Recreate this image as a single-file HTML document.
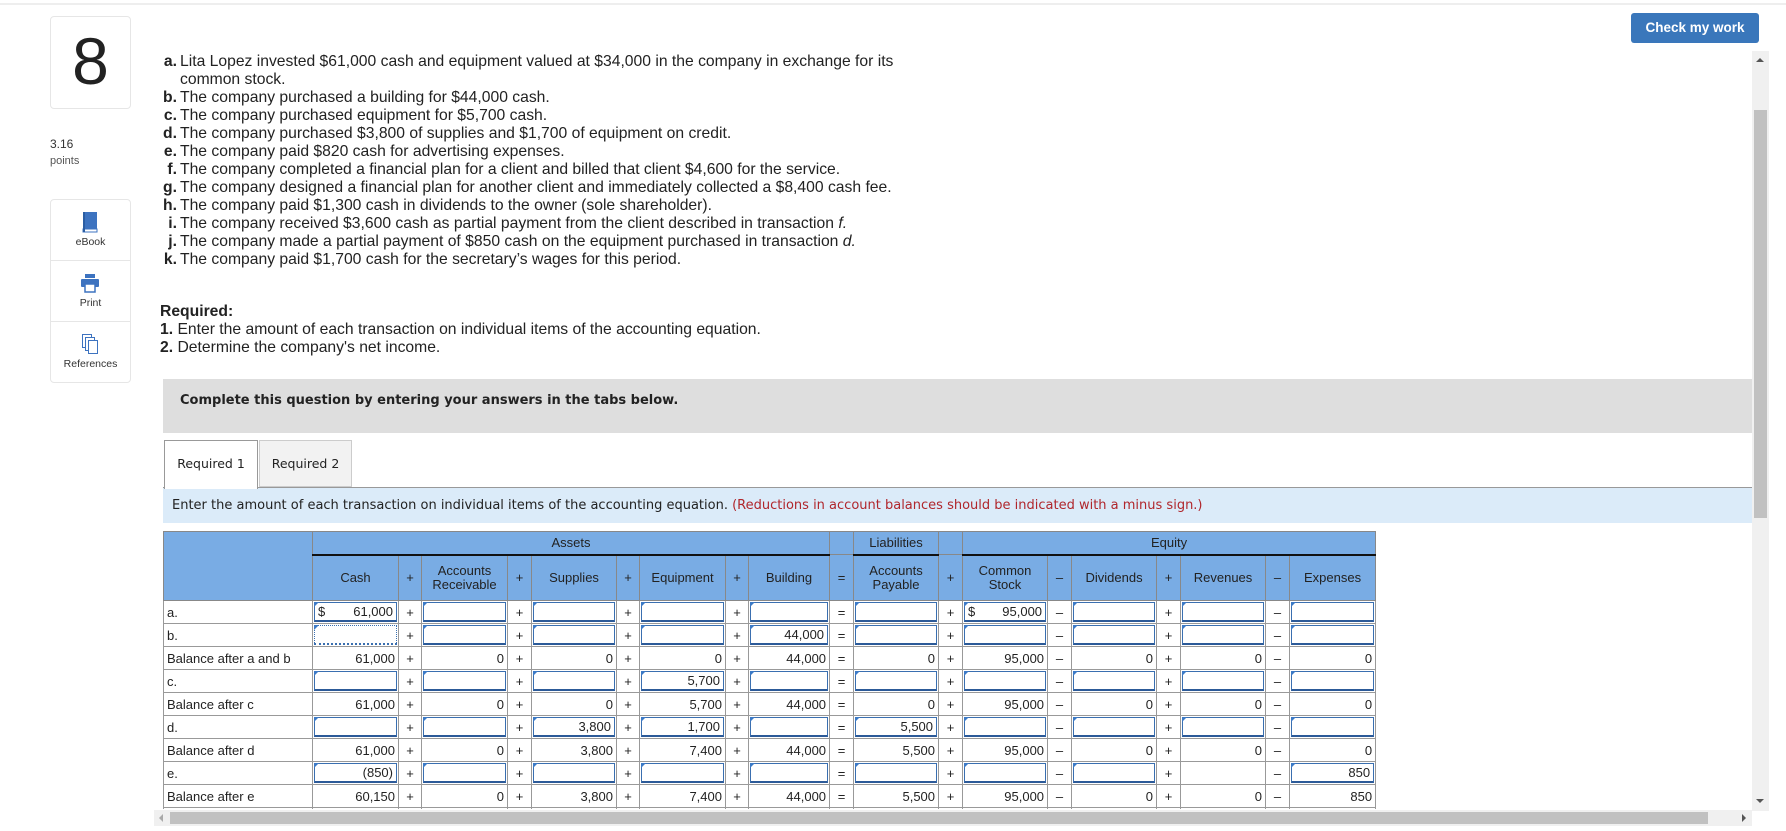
<!DOCTYPE html>
<html><head><meta charset="utf-8"><style>
*{margin:0;padding:0;box-sizing:border-box}
body{width:1786px;height:831px;overflow:hidden;background:#fff;font-family:"Liberation Sans",Arial,sans-serif;color:#222;position:relative}
.abs{position:absolute}
.topline{left:0;top:3px;width:1786px;height:2px;background:#eee}
.card{border:1px solid #e6e6e6;border-radius:4px;background:#fff}
.q{font-size:15.7px;line-height:18px;color:#222}
.q div{position:relative;padding-left:18px;white-space:nowrap}
.q b{position:absolute;left:0;width:15px;text-align:right;font-weight:bold}
.side{font-size:10.5px;color:#333;text-align:center}
table{border-collapse:collapse;table-layout:fixed;font-size:13px;font-family:"Liberation Sans",Arial,sans-serif}
td{height:23px;border:1px solid #999;padding:0 3px;white-space:nowrap;text-align:right;color:#222}
td.op{text-align:center;padding:0}
td.lbl{text-align:left}
thead td{background:#79ace4;text-align:center;border-color:#888;line-height:14px}
td.inp{padding:0;position:relative}
td.inp div{position:absolute;left:1px;top:1px;right:1px;bottom:1px;border:1px solid #3a6fb0;border-bottom:2px solid #2c5a98;background:#fff;padding:0 3px;line-height:18px;text-align:right}
td.inp div:before{content:"";position:absolute;left:-1px;top:-1px;border-left:5px solid #3c7ac6;border-bottom:5px solid transparent}
td.inp div.dot{border:1px dotted #3a6fb0;border-bottom:2px dotted #3a6fb0}
.dl{float:left}
</style></head><body>
<div class="abs topline"></div>

<div class="abs card" style="left:50px;top:16px;width:81px;height:93px"></div>
<div class="abs" style="left:50px;top:18px;width:81px;text-align:center;font-size:66px;font-weight:300;line-height:86px;color:#222">8</div>
<div class="abs" style="left:50px;top:137px;font-size:12px;color:#333">3.16</div>
<div class="abs" style="left:50px;top:155px;font-size:11px;color:#555">points</div>

<div class="abs card" style="left:50px;top:199px;width:81px;height:184px"></div>
<div class="abs" style="left:51px;top:260px;width:79px;height:1px;background:#e6e6e6"></div>
<div class="abs" style="left:51px;top:321px;width:79px;height:1px;background:#e6e6e6"></div>
<svg class="abs" style="left:81px;top:211px" width="18" height="22" viewBox="0 0 18 22"><rect x="2" y="1" width="14" height="17" fill="#3d73c0"/><rect x="2" y="18" width="14" height="3" fill="#fff" stroke="#3d73c0"/><rect x="2" y="1" width="2" height="20" fill="#2a5da3"/></svg>
<div class="abs side" style="left:50px;top:236px;width:81px">eBook</div>
<svg class="abs" style="left:80px;top:273px" width="20" height="20" viewBox="0 0 20 20"><rect x="5" y="1" width="10" height="4" fill="#3d73c0"/><rect x="1" y="6" width="18" height="8" rx="1" fill="#3d73c0"/><rect x="5" y="11" width="10" height="8" fill="#fff" stroke="#3d73c0" stroke-width="1.5"/></svg>
<div class="abs side" style="left:50px;top:297px;width:81px">Print</div>
<svg class="abs" style="left:81px;top:333px" width="18" height="22" viewBox="0 0 18 22"><rect x="1.5" y="1.5" width="9" height="13" fill="#fff" stroke="#3d73c0"/><rect x="4.5" y="4.5" width="9" height="13" fill="#fff" stroke="#3d73c0"/><rect x="7.5" y="7.5" width="9" height="13" fill="#fff" stroke="#3d73c0"/></svg>
<div class="abs side" style="left:50px;top:358px;width:81px">References</div>

<div class="abs q" style="left:162px;top:53px">
<div><b>a.</b>Lita Lopez invested $61,000 cash and equipment valued at $34,000 in the company in exchange for its</div>
<div>common stock.</div>
<div><b>b.</b>The company purchased a building for $44,000 cash.</div>
<div><b>c.</b>The company purchased equipment for $5,700 cash.</div>
<div><b>d.</b>The company purchased $3,800 of supplies and $1,700 of equipment on credit.</div>
<div><b>e.</b>The company paid $820 cash for advertising expenses.</div>
<div><b>f.</b>The company completed a financial plan for a client and billed that client $4,600 for the service.</div>
<div><b>g.</b>The company designed a financial plan for another client and immediately collected a $8,400 cash fee.</div>
<div><b>h.</b>The company paid $1,300 cash in dividends to the owner (sole shareholder).</div>
<div><b>i.</b>The company received $3,600 cash as partial payment from the client described in transaction <i>f.</i></div>
<div><b>j.</b>The company made a partial payment of $850 cash on the equipment purchased in transaction <i>d.</i></div>
<div><b>k.</b>The company paid $1,700 cash for the secretary’s wages for this period.</div>
</div>
<div class="abs q" style="left:160px;top:303px;line-height:18px">
<div style="padding:0"><span style="font-weight:bold">Required:</span></div>
<div style="padding:0"><span style="font-weight:bold">1.</span> Enter the amount of each transaction on individual items of the accounting equation.</div>
<div style="padding:0"><span style="font-weight:bold">2.</span> Determine the company's net income.</div>
</div>

<div class="abs" style="left:1631px;top:13px;width:128px;height:30px;background:#3a77bb;border-radius:3px;color:#fff;font-weight:bold;font-size:13.5px;text-align:center;line-height:30px">Check my work</div>

<div class="abs" style="left:1752px;top:51px;width:17px;height:760px;background:#f0f0f0"></div>
<div class="abs" style="left:1754px;top:110px;width:13px;height:408px;background:#c1c1c1"></div>
<div class="abs" style="left:1756px;top:58px;border-left:4px solid transparent;border-right:4px solid transparent;border-bottom:4px solid #555"></div>
<div class="abs" style="left:1756px;top:799px;border-left:4px solid transparent;border-right:4px solid transparent;border-top:4px solid #555"></div>

<div class="abs" style="left:163px;top:379px;width:1589px;height:54px;background:#dedede"></div>
<div class="abs" style="left:180px;top:393px;font-family:'DejaVu Sans',Verdana,sans-serif;font-weight:bold;font-size:13px;color:#222">Complete this question by entering your answers in the tabs below.</div>

<div class="abs" style="left:164px;top:440px;width:94px;height:49px;border:1px solid #999;border-bottom:none;background:#fff;font-family:'DejaVu Sans',Verdana,sans-serif;font-size:12.5px;text-align:center;line-height:46px;z-index:2">Required 1</div>
<div class="abs" style="left:259px;top:440px;width:93px;height:47px;border:1px solid #ccc;background:#f2f2f2;font-family:'DejaVu Sans',Verdana,sans-serif;font-size:12.5px;text-align:center;line-height:46px">Required 2</div>
<div class="abs" style="left:163px;top:487px;width:1589px;height:1px;background:#999"></div>
<div class="abs" style="left:163px;top:488px;width:1589px;height:35px;background:#dbebf9;font-family:'DejaVu Sans',Verdana,sans-serif;font-size:13px;line-height:35px;padding-left:9px;color:#222;white-space:nowrap">Enter the amount of each transaction on individual items of the accounting equation. <span style="color:#b0262c">(Reductions in account balances should be indicated with a minus sign.)</span></div>

<div class="abs" style="left:163px;top:531px;width:1214px;height:278px;overflow:hidden">
<table style="width:1212px">
<colgroup><col style="width:149px"><col style="width:86px"><col style="width:23px"><col style="width:86px"><col style="width:24px"><col style="width:85px"><col style="width:23px"><col style="width:86px"><col style="width:23px"><col style="width:81px"><col style="width:24px"><col style="width:85px"><col style="width:24px"><col style="width:85px"><col style="width:24px"><col style="width:85px"><col style="width:24px"><col style="width:85px"><col style="width:24px"><col style="width:86px"></colgroup>
<thead>
<tr><td rowspan="2" style="height:68px"></td><td colspan="9" style="height:22px;border-bottom:2px solid #111">Assets</td><td></td><td style="border-bottom:2px solid #111">Liabilities</td><td></td><td colspan="7" style="border-bottom:2px solid #111">Equity</td></tr>
<tr><td style="height:46px">Cash</td><td class="op">+</td><td>Accounts<br>Receivable</td><td class="op">+</td><td>Supplies</td><td class="op">+</td><td>Equipment</td><td class="op">+</td><td>Building</td><td class="op">=</td><td>Accounts<br>Payable</td><td class="op">+</td><td>Common<br>Stock</td><td class="op">–</td><td>Dividends</td><td class="op">+</td><td>Revenues</td><td class="op">–</td><td>Expenses</td></tr>
</thead>
<tbody>
<tr><td class="lbl">a.</td><td class="inp"><div><span class="dl">$</span>61,000</div></td><td class="op">+</td><td class="inp"><div></div></td><td class="op">+</td><td class="inp"><div></div></td><td class="op">+</td><td class="inp"><div></div></td><td class="op">+</td><td class="inp"><div></div></td><td class="op">=</td><td class="inp"><div></div></td><td class="op">+</td><td class="inp"><div><span class="dl">$</span>95,000</div></td><td class="op">–</td><td class="inp"><div></div></td><td class="op">+</td><td class="inp"><div></div></td><td class="op">–</td><td class="inp"><div></div></td></tr>
<tr><td class="lbl">b.</td><td class="inp"><div class="dot"></div></td><td class="op">+</td><td class="inp"><div></div></td><td class="op">+</td><td class="inp"><div></div></td><td class="op">+</td><td class="inp"><div></div></td><td class="op">+</td><td class="inp"><div>44,000</div></td><td class="op">=</td><td class="inp"><div></div></td><td class="op">+</td><td class="inp"><div></div></td><td class="op">–</td><td class="inp"><div></div></td><td class="op">+</td><td class="inp"><div></div></td><td class="op">–</td><td class="inp"><div></div></td></tr>
<tr><td class="lbl">Balance after a and b</td><td>61,000</td><td class="op">+</td><td>0</td><td class="op">+</td><td>0</td><td class="op">+</td><td>0</td><td class="op">+</td><td>44,000</td><td class="op">=</td><td>0</td><td class="op">+</td><td>95,000</td><td class="op">–</td><td>0</td><td class="op">+</td><td>0</td><td class="op">–</td><td>0</td></tr>
<tr><td class="lbl">c.</td><td class="inp"><div></div></td><td class="op">+</td><td class="inp"><div></div></td><td class="op">+</td><td class="inp"><div></div></td><td class="op">+</td><td class="inp"><div>5,700</div></td><td class="op">+</td><td class="inp"><div></div></td><td class="op">=</td><td class="inp"><div></div></td><td class="op">+</td><td class="inp"><div></div></td><td class="op">–</td><td class="inp"><div></div></td><td class="op">+</td><td class="inp"><div></div></td><td class="op">–</td><td class="inp"><div></div></td></tr>
<tr><td class="lbl">Balance after c</td><td>61,000</td><td class="op">+</td><td>0</td><td class="op">+</td><td>0</td><td class="op">+</td><td>5,700</td><td class="op">+</td><td>44,000</td><td class="op">=</td><td>0</td><td class="op">+</td><td>95,000</td><td class="op">–</td><td>0</td><td class="op">+</td><td>0</td><td class="op">–</td><td>0</td></tr>
<tr><td class="lbl">d.</td><td class="inp"><div></div></td><td class="op">+</td><td class="inp"><div></div></td><td class="op">+</td><td class="inp"><div>3,800</div></td><td class="op">+</td><td class="inp"><div>1,700</div></td><td class="op">+</td><td class="inp"><div></div></td><td class="op">=</td><td class="inp"><div>5,500</div></td><td class="op">+</td><td class="inp"><div></div></td><td class="op">–</td><td class="inp"><div></div></td><td class="op">+</td><td class="inp"><div></div></td><td class="op">–</td><td class="inp"><div></div></td></tr>
<tr><td class="lbl">Balance after d</td><td>61,000</td><td class="op">+</td><td>0</td><td class="op">+</td><td>3,800</td><td class="op">+</td><td>7,400</td><td class="op">+</td><td>44,000</td><td class="op">=</td><td>5,500</td><td class="op">+</td><td>95,000</td><td class="op">–</td><td>0</td><td class="op">+</td><td>0</td><td class="op">–</td><td>0</td></tr>
<tr><td class="lbl">e.</td><td class="inp"><div>(850)</div></td><td class="op">+</td><td class="inp"><div></div></td><td class="op">+</td><td class="inp"><div></div></td><td class="op">+</td><td class="inp"><div></div></td><td class="op">+</td><td class="inp"><div></div></td><td class="op">=</td><td class="inp"><div></div></td><td class="op">+</td><td class="inp"><div></div></td><td class="op">–</td><td class="inp"><div></div></td><td class="op">+</td><td></td><td class="op">–</td><td class="inp"><div>850</div></td></tr>
<tr><td class="lbl">Balance after e</td><td>60,150</td><td class="op">+</td><td>0</td><td class="op">+</td><td>3,800</td><td class="op">+</td><td>7,400</td><td class="op">+</td><td>44,000</td><td class="op">=</td><td>5,500</td><td class="op">+</td><td>95,000</td><td class="op">–</td><td>0</td><td class="op">+</td><td>0</td><td class="op">–</td><td>850</td></tr>
<tr><td class="lbl"></td><td class="inp"><div></div></td><td></td><td class="inp"><div></div></td><td></td><td class="inp"><div></div></td><td></td><td class="inp"><div></div></td><td></td><td class="inp"><div></div></td><td></td><td class="inp"><div></div></td><td></td><td class="inp"><div></div></td><td></td><td class="inp"><div></div></td><td></td><td class="inp"><div></div></td><td></td><td class="inp"><div></div></td></tr>
</tbody></table>
</div>

<div class="abs" style="left:154px;top:810px;width:1598px;height:16px;background:#f0f0f0"></div>
<div class="abs" style="left:170px;top:812px;width:1538px;height:12px;background:#c1c1c1"></div>
<div class="abs" style="left:159px;top:814px;border-top:4px solid transparent;border-bottom:4px solid transparent;border-right:4px solid #aaa"></div>
<div class="abs" style="left:1742px;top:814px;border-top:4px solid transparent;border-bottom:4px solid transparent;border-left:4px solid #555"></div>
</body></html>
